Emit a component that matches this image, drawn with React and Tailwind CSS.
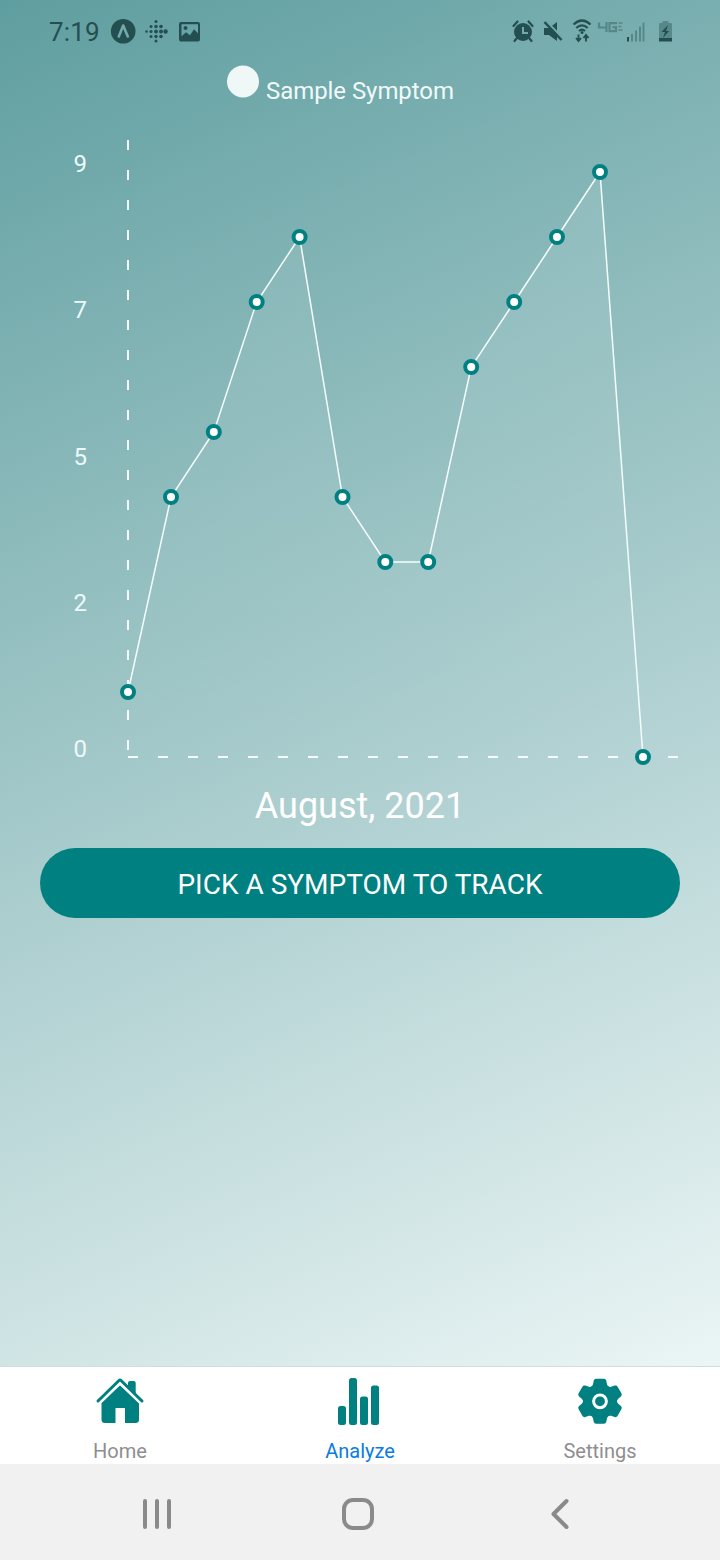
const POINTS = [[128, 692], [171, 497], [213.8, 432], [256.7, 302], [299.600, 237], [342.5, 497], [385.3, 562], [428.2, 562], [471.2, 367], [514.200, 302], [557, 237], [600, 172], [643, 757]];
const LINE = POINTS.map((p) => p.join(",")).join(" ");

function StatusBar() {
  return (
    <header className="flex h-[62px] shrink-0 items-center justify-between pl-[49px] pr-[47px] text-[#244f50]">
      <div className="flex items-center">
        <span className="w-[61px] pt-0.5 text-[26px] leading-[60px] tracking-[0.2px]">7:19</span>
        <svg width="92" height="30" viewBox="110 16 92 30" fill="currentColor">
          <circle cx="123.2" cy="31.3" r="12.3" />
          <path d="M118.8 36.5 L123.2 25.5 L127.8 36.5" fill="none" stroke="#76a9aa" strokeWidth="2.6" strokeLinecap="round" strokeLinejoin="round" />
          {[[156, 21.5, 1.5], [156, 26.5, 1.7], [156, 31.5, 1.9], [156, 36.5, 1.7], [156, 41, 1.5], [151, 26.5, 1.5], [151, 31.5, 1.6], [151, 36.5, 1.5], [161, 26.5, 1.8], [161, 31.5, 2], [161, 36.5, 1.8], [146.5, 31.5, 1.3], [165.6, 31.5, 2.2]].map(([x, y, r]) => (
            <circle key={`${x}-${y}`} cx={x} cy={y} r={r} />
          ))}
          <path fillRule="evenodd" d="M181 22h17a2 2 0 0 1 2 2v15.500a2 2 0 0 1-2 2h-17a2 2 0 0 1-2-2V24a2 2 0 0 1 2-2zM181.500 24.200v12l4.500-4 4 3 4-6 4 4V24.200z" />
          <circle cx="185.500" cy="28" r="2" />
        </svg>
      </div>
      <svg width="163" height="34" viewBox="510 14 163 34" fill="currentColor">
        <circle cx="523" cy="32" r="9" />
        <path d="M513.500 26 l4-4.500 M532.500 26 l-4-4.500 M516.500 38.500l-2 2.500 M529.500 38.500l2 2.500" fill="none" stroke="currentColor" strokeWidth="2.200" strokeLinecap="round" />
        <path d="M523 27v6h5" fill="none" stroke="#72aaab" strokeWidth="2" />
        <path d="M544 28h5l8-6v19l-8-6h-5z" />
        <path d="M546.500 21.500l17 17.500" stroke="#72aaab" strokeWidth="2.500" />
        <path d="M544.500 22l17 18" stroke="currentColor" strokeWidth="2.500" />
        <g fill="none" stroke="currentColor" strokeWidth="2.200">
          <path d="M573.500 24.500q8.500-8 17 0 M576.300 28q5.700-5.200 11.400 0 M579 31q3-2.700 6 0" />
          <path d="M578.500 34.500v6m-2.500-2.500l2.500 3 2.500-3 M586 41.500v-6m-2.500 2.500l2.500-3 2.500 3" strokeWidth="1.900" />
        </g>
        <circle cx="582" cy="32.500" r="1.500" />
        <g opacity=".4" fill="none" stroke="currentColor" strokeWidth="2.200">
          <path d="M599 22.500v5h8 M606.500 22v10 M617 23.200h-7.500v8h6.500v-4h-3.500" />
          <path d="M618.500 23h4 M618.500 26.500h3 M618.500 30h4" strokeWidth="1.500" />
        </g>
        <rect x="627" y="37" width="2" height="4.500" />
        <path opacity=".4" d="M631 34h2v7.500h-2z M635 30.500h2v11h-2z M639 26.500h2v15h-2z M642.500 22.500h2v19h-2z" />
        <path opacity=".4" d="M662.500 21h6v2h2.500q1 0 1 1v14h-13v-14q0-1 1-1h2.500z" />
        <path d="M659 38h13v3.500h-13z M668 25l-6.500 7h3.500l-2 6 6-7h-3z" />
      </svg>
    </header>
  );
}

function Chart() {
  return (
    <svg width="720" height="722" viewBox="0 62 720 722" className="block shrink-0">
      <defs>
        <linearGradient id="area" gradientUnits="userSpaceOnUse" x1="0" y1="172" x2="0" y2="757">
          <stop offset="0" stopColor="#fff" stopOpacity=".1" />
          <stop offset="1" stopColor="#fff" stopOpacity="0" />
        </linearGradient>
      </defs>
      <circle cx="243" cy="81.500" r="16" fill="#eff8f7" />
      <text x="266" y="99" fontSize="24" fill="#f0f9f9" textLength="188">Sample Symptom</text>
      {[["9", 172], ["7", 318], ["5", 464.500], ["2", 611], ["0", 757]].map(([label, y]) => (
        <text key={label} x="87" y={y} fontSize="24" fill="#edf9f9" textAnchor="end">{label}</text>
      ))}
      <path d="M128 140V757 M128 757H680" stroke="#f5fdfd" strokeWidth="2" strokeDasharray="10 20" />
      <polygon points={`${LINE} 128,757`} fill="url(#area)" />
      <polyline points={LINE} fill="none" stroke="#f6fdfd" strokeWidth="1.500" />
      {POINTS.map(([x, y]) => (
        <circle key={x} cx={x} cy={y} r="6" fill="#fff" stroke="#008080" strokeWidth="4" />
      ))}
    </svg>
  );
}

function Tab({ label, active, children }) {
  return (
    <div className="flex w-60 flex-col items-center">
      <svg width="56" height="68" viewBox="0 0 56 68" fill="#008080" className="shrink-0">{children}</svg>
      <span className={active ? "text-[20px] leading-[32px] text-[#0a7be0]" : "text-[20px] leading-[32px] text-[#8e8e8f]"}>{label}</span>
    </div>
  );
}

export default function App() {
  return (
    <div className="flex h-[1560px] w-[720px] flex-col overflow-hidden" style={{ fontFamily: "Roboto, sans-serif" }}>
      <main className="flex h-[1366px] shrink-0 flex-col bg-[linear-gradient(156deg,#5f9ea0,#ebf5f5)]">
        <StatusBar />
        <Chart />
        <h1 className="h-16 text-center text-[36px] leading-[44px] text-white">August, 2021</h1>
        <button className="mx-10 h-[70px] rounded-full bg-[#008080] pt-1 text-[28px] text-white">PICK A SYMPTOM TO TRACK</button>
      </main>
      <nav className="flex h-[98px] shrink-0 border-t border-[#d3dcdc] bg-white">
        <Tab label="Home">
          <path d="M28 17.500l19 18.500v16.500q0 3.500-3.500 3.500H33V41h-9.500v15H13q-3.500 0-3.500-3.500V36z" />
          <path d="M5.500 35L27 14.500q1-1 2 0L50.500 35" fill="none" stroke="#fff" strokeWidth="7" />
          <path d="M36 21V16q0-2 2-2h3.700q2 0 2 2v12z" />
          <path d="M6 34L27 13.500q1-1 2 0L50 34" fill="none" stroke="#008080" strokeWidth="3" strokeLinecap="round" />
        </Tab>
        <Tab label="Analyze" active>
          <rect x="6" y="39" width="8" height="19" rx="2.500" />
          <rect x="17" y="11" width="8" height="47" rx="2.500" />
          <rect x="28" y="29.500" width="8" height="28.500" rx="2.500" />
          <rect x="39" y="18.500" width="8" height="39.500" rx="2.500" />
        </Tab>
        <Tab label="Settings">
          <g transform="translate(28 34.300)">
            <circle r="17" />
            {[0, 60, 120, 180, 240, 300].map((angle) => (
              <path key={angle} transform={`rotate(${angle})`} d="M-9.500-14q2-.8 2.500-3l.7-3.500q.5-2 2.300-2h8q1.800 0 2.300 2l.7 3.500q.5 2.200 2.500 3L0 0z" />
            ))}
            <circle r="6.400" fill="none" stroke="#fff" strokeWidth="3" />
          </g>
        </Tab>
      </nav>
      <footer className="flex h-24 shrink-0 bg-[#f1f1f1]">
        <svg width="720" height="96" viewBox="0 1464 720 96" fill="none" stroke="#8a8a8a" strokeWidth="4" strokeLinecap="round" strokeLinejoin="round">
          <path d="M145 1501v26 M157 1501v26 M169 1501v26" />
          <rect x="344" y="1500" width="28" height="28" rx="9" />
          <path d="M566.500 1501l-13 13 13 13" />
        </svg>
      </footer>
    </div>
  );
}
